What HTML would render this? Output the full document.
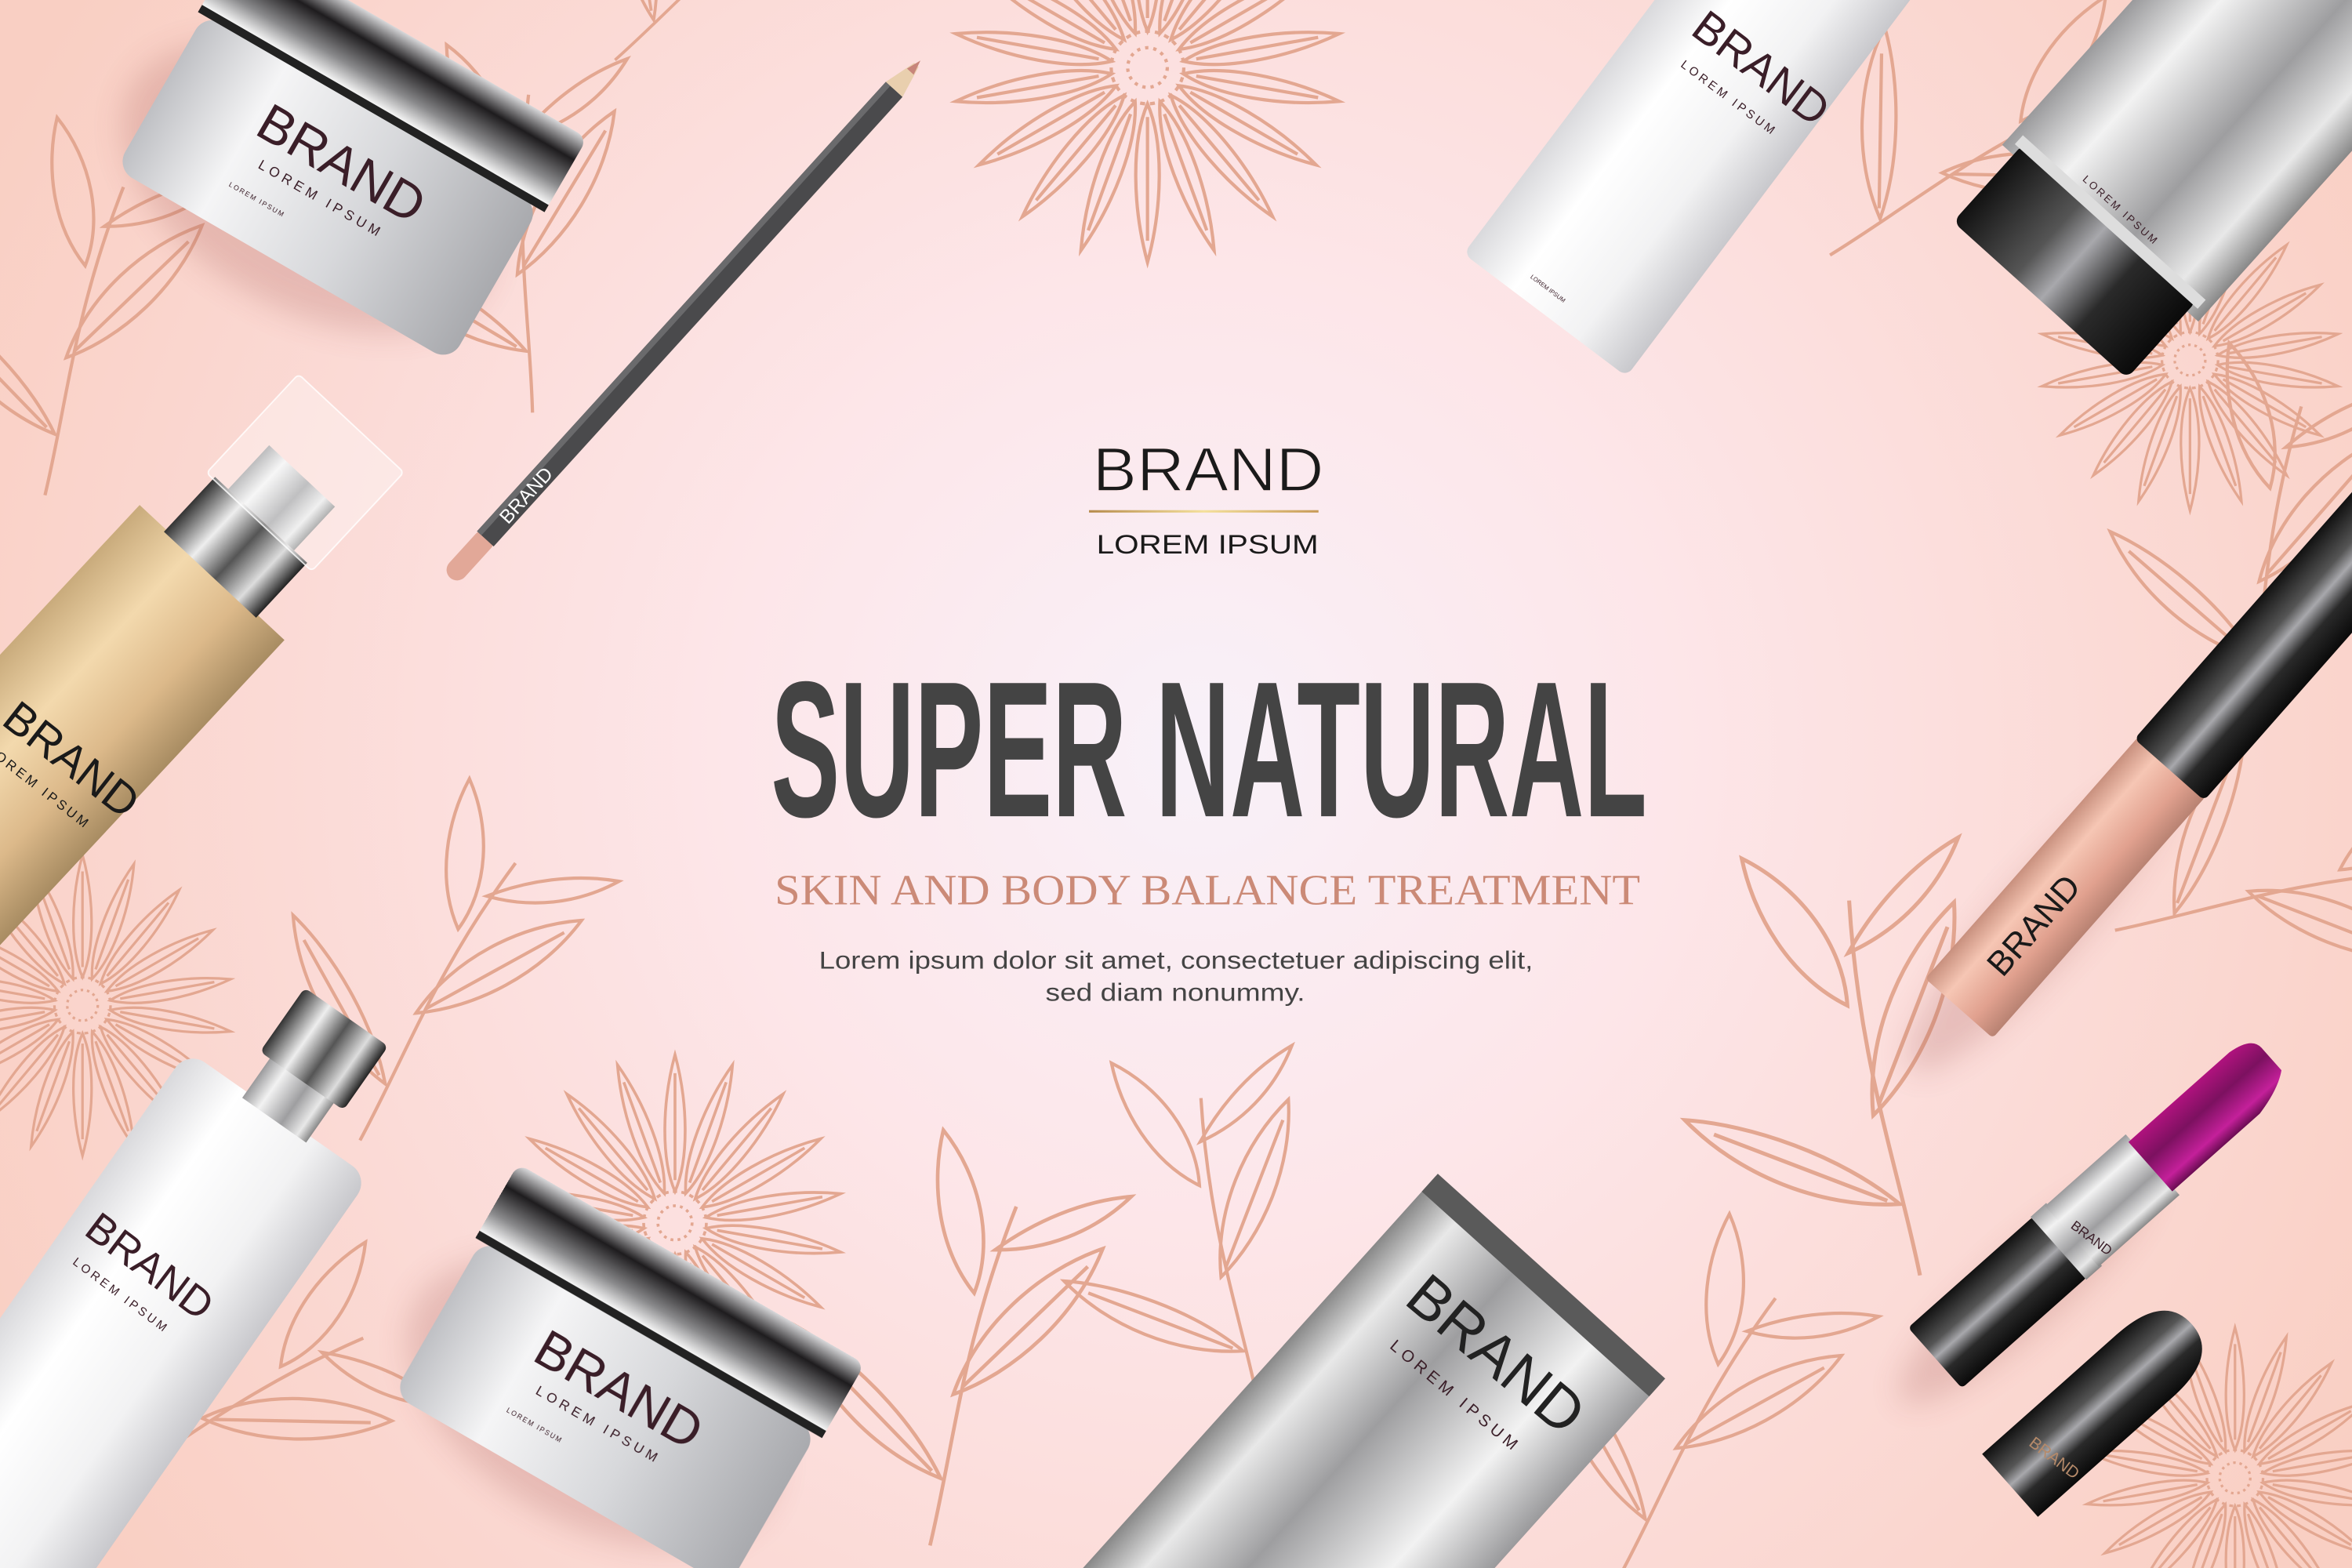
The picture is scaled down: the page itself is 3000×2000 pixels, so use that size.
<!DOCTYPE html>
<html><head><meta charset="utf-8"><style>
html,body{margin:0;padding:0;width:3000px;height:2000px;overflow:hidden;background:#fbe0dc}
svg{display:block;position:absolute;left:0;top:0}
</style></head><body>
<svg width="3000" height="2000" viewBox="0 0 1568 1045" preserveAspectRatio="none" xmlns="http://www.w3.org/2000/svg">
<defs>
<radialGradient id="bg" cx="800" cy="500" r="900" gradientUnits="userSpaceOnUse">
<stop offset="0" stop-color="#f8f1f9"/><stop offset="0.35" stop-color="#fde6e9"/><stop offset="1" stop-color="#f9cfc3"/></radialGradient>
<linearGradient id="gold" x1="0" y1="0" x2="0" y2="1"><stop offset="0" stop-color="#c9ab7c"/><stop offset="0.35" stop-color="#f3d9ad"/><stop offset="0.7" stop-color="#dcb98a"/><stop offset="1" stop-color="#a88c62"/></linearGradient>
<linearGradient id="white" x1="0" y1="0" x2="0" y2="1"><stop offset="0" stop-color="#d9d9dc"/><stop offset="0.3" stop-color="#ffffff"/><stop offset="0.7" stop-color="#f2f2f3"/><stop offset="1" stop-color="#c8c8cc"/></linearGradient>
<linearGradient id="silver" x1="0" y1="0" x2="0" y2="1"><stop offset="0" stop-color="#9a9a9c"/><stop offset="0.25" stop-color="#f2f2f2"/><stop offset="0.6" stop-color="#9e9ea0"/><stop offset="0.85" stop-color="#e8e8e8"/><stop offset="1" stop-color="#888"/></linearGradient>
<linearGradient id="chrome" x1="0" y1="0" x2="0" y2="1"><stop offset="0" stop-color="#333"/><stop offset="0.3" stop-color="#eee"/><stop offset="0.55" stop-color="#555"/><stop offset="0.8" stop-color="#ddd"/><stop offset="1" stop-color="#222"/></linearGradient>
<linearGradient id="black" x1="0" y1="0" x2="0" y2="1"><stop offset="0" stop-color="#111"/><stop offset="0.35" stop-color="#555"/><stop offset="0.5" stop-color="#a8a8ac"/><stop offset="0.7" stop-color="#2a2a2a"/><stop offset="1" stop-color="#0a0a0a"/></linearGradient>
<linearGradient id="pinkg" x1="0" y1="0" x2="0" y2="1"><stop offset="0" stop-color="#c8907e"/><stop offset="0.3" stop-color="#f6c6b4"/><stop offset="0.7" stop-color="#e1a18f"/><stop offset="1" stop-color="#b88272"/></linearGradient>
<linearGradient id="mag" x1="0" y1="0" x2="0" y2="1"><stop offset="0" stop-color="#b0127e"/><stop offset="0.4" stop-color="#7c1160"/><stop offset="0.8" stop-color="#c4209a"/><stop offset="1" stop-color="#6a0c52"/></linearGradient>
<linearGradient id="lidg" x1="0" y1="0" x2="0" y2="1"><stop offset="0" stop-color="#d8d8da"/><stop offset="0.3" stop-color="#1e1c1e"/><stop offset="0.65" stop-color="#8a8a8c"/><stop offset="0.9" stop-color="#f4f4f4"/><stop offset="1" stop-color="#bbb"/></linearGradient>
<linearGradient id="jarb" x1="0" y1="0" x2="1" y2="0"><stop offset="0" stop-color="#bfc0c4"/><stop offset="0.25" stop-color="#f5f5f6"/><stop offset="0.6" stop-color="#d7d8db"/><stop offset="1" stop-color="#a9aaae"/></linearGradient>
<linearGradient id="goldline" x1="0" y1="0" x2="1" y2="0"><stop offset="0" stop-color="#b58a4a"/><stop offset="0.5" stop-color="#f4e09a"/><stop offset="1" stop-color="#c79a56"/></linearGradient>
<filter id="sh" x="-30%" y="-30%" width="160%" height="160%"><feGaussianBlur stdDeviation="10"/></filter>

<g id="petal"><path d="M0,-22 C-10,-45 -9,-85 0,-118 C9,-85 10,-45 0,-22Z M0,-30 L0,-105" fill="none"/></g>
<g id="daisy" fill="none" stroke="#e3a791" stroke-width="2">
<use href="#petal"/><use href="#petal" transform="rotate(20)"/><use href="#petal" transform="rotate(40)"/><use href="#petal" transform="rotate(60)"/><use href="#petal" transform="rotate(80)"/><use href="#petal" transform="rotate(100)"/><use href="#petal" transform="rotate(120)"/><use href="#petal" transform="rotate(140)"/><use href="#petal" transform="rotate(160)"/><use href="#petal" transform="rotate(180)"/><use href="#petal" transform="rotate(200)"/><use href="#petal" transform="rotate(220)"/><use href="#petal" transform="rotate(240)"/><use href="#petal" transform="rotate(260)"/><use href="#petal" transform="rotate(280)"/><use href="#petal" transform="rotate(300)"/><use href="#petal" transform="rotate(320)"/><use href="#petal" transform="rotate(340)"/>
<circle r="22" stroke-dasharray="3 3"/><circle r="12" stroke-dasharray="2 3"/>
</g>
<g id="branch" fill="none" stroke="#e3a791" stroke-width="2.2">
<path d="M0,0 C20,-60 30,-120 70,-200"/>
<path d="M10,-40 C-30,-60 -60,-100 -70,-140 C-40,-120 -5,-80 10,-40Z M-60,-125 L5,-45"/>
<path d="M22,-90 C60,-100 100,-130 120,-170 C80,-160 40,-130 22,-90Z M110,-160 L28,-94"/>
<path d="M40,-150 C20,-180 20,-220 30,-250 C50,-220 55,-180 40,-150Z"/>
<path d="M55,-175 C80,-190 110,-200 140,-200 C115,-180 85,-172 55,-175Z"/>
</g>
<g id="jar">
<rect x="-140" y="-40" width="280" height="130" rx="14" fill="url(#jarb)"/>
<rect x="-145" y="-100" width="290" height="62" rx="8" fill="url(#lidg)"/>
<rect x="-145" y="-44" width="290" height="6" fill="#222"/>
<text x="0" y="18" text-anchor="middle" font-family="Liberation Sans,sans-serif" font-size="38" fill="#3a1e28">BRAND</text>
<text x="0" y="38" text-anchor="middle" font-family="Liberation Sans,sans-serif" font-size="10" letter-spacing="3" fill="#3a1e28">LOREM IPSUM</text>
<text x="-40" y="60" text-anchor="middle" font-family="Liberation Sans,sans-serif" font-size="5" letter-spacing="1" fill="#3a1e28">LOREM IPSUM</text>
</g>
</defs>

<rect width="1568" height="1045" fill="url(#bg)"/>

<!-- floral sketches -->
<use href="#daisy" transform="translate(765,45) scale(1.1)"/>
<use href="#daisy" transform="translate(1460,240) scale(0.85)"/>
<use href="#daisy" transform="translate(55,670) scale(0.85)"/>
<use href="#daisy" transform="translate(450,815) scale(0.95)"/>
<use href="#daisy" transform="translate(1490,985) scale(0.85)"/>
<use href="#branch" transform="translate(355,275) rotate(-20)"/>
<use href="#branch" transform="translate(410,40) rotate(30) scale(0.9)"/>
<use href="#branch" transform="translate(30,330) rotate(-5)"/>
<use href="#branch" transform="translate(240,760) rotate(10)"/>
<use href="#branch" transform="translate(60,1000) rotate(40)"/>
<use href="#branch" transform="translate(620,1030) rotate(-5) scale(1.1)"/>
<use href="#branch" transform="translate(840,940) rotate(-30)"/>
<use href="#branch" transform="translate(1280,850) rotate(-30) scale(1.2)"/>
<use href="#branch" transform="translate(1220,170) rotate(40)"/>
<use href="#branch" transform="translate(1410,620) rotate(60)"/>
<use href="#branch" transform="translate(1080,1050) rotate(10)"/>
<use href="#branch" transform="translate(1500,480) rotate(-10)"/>

<!-- shadows -->
<g opacity="0.22" filter="url(#sh)" fill="#a0504a">
<ellipse cx="205" cy="125" rx="135" ry="80" transform="rotate(30 205 125)"/>
<ellipse cx="395" cy="935" rx="135" ry="80" transform="rotate(30 395 935)"/>
<ellipse cx="1360" cy="615" rx="130" ry="28" transform="rotate(-48.6 1360 615)"/>
<ellipse cx="1350" cy="860" rx="110" ry="26" transform="rotate(-41.6 1350 860)"/>
</g>

<!-- top-left jar -->
<use href="#jar" transform="translate(230,105) rotate(30) scale(0.92)"/>

<!-- pencil -->
<g transform="translate(300,385) rotate(-47.7)">
<rect x="0" y="-7" width="40" height="14" rx="7" fill="#e2a898"/>
<rect x="35" y="-7.5" width="405" height="15" fill="#4a4a4c"/>
<rect x="35" y="-7.5" width="405" height="4" fill="#6a6a6c"/>
<path d="M440,-7.5 L462,-2 L462,2 L440,7.5Z" fill="#e9cfae"/>
<path d="M456,-3 L466,0 L456,3Z" fill="#c7857a"/>
<text x="52" y="5" font-family="Liberation Sans,sans-serif" font-size="13" fill="#fff">BRAND</text>
</g>

<!-- top white tube -->
<g transform="translate(1030,210) rotate(-53)">
<rect x="0" y="-68" width="400" height="136" rx="6" fill="url(#white)"/>
</g>
<text transform="translate(1126,22) rotate(37)" font-family="Liberation Sans,sans-serif" font-size="30" fill="#3a1e28">BRAND</text>
<text transform="translate(1120,44) rotate(37)" font-family="Liberation Sans,sans-serif" font-size="8" letter-spacing="2" fill="#3a1e28">LOREM IPSUM</text>
<text transform="translate(1020,185) rotate(37)" font-family="Liberation Sans,sans-serif" font-size="4" fill="#3a1e28">LOREM IPSUM</text>

<!-- top-right silver tube -->
<g transform="translate(1360,200) rotate(-48)">
<rect x="60" y="-88" width="400" height="176" fill="url(#silver)"/>
<rect x="0" y="-78" width="70" height="156" rx="6" fill="url(#black)"/>
<rect x="66" y="-82" width="8" height="164" fill="#ddd"/>
</g>
<text transform="translate(1388,120) rotate(42)" font-family="Liberation Sans,sans-serif" font-size="7" letter-spacing="1.5" fill="#3a1e28">LOREM IPSUM</text>

<!-- gold spray bottle -->
<g transform="translate(140,383) rotate(-47)">
<rect x="-420" y="-66" width="422" height="132" fill="url(#gold)"/>
<rect x="0" y="-42" width="50" height="84" fill="url(#chrome)"/>
<rect x="50" y="-30" width="40" height="60" fill="url(#silver)"/>
<rect x="48" y="-48" width="90" height="96" rx="3" fill="#fff" fill-opacity="0.35" stroke="#fff" stroke-opacity="0.8"/>
</g>
<text transform="translate(0,482) rotate(38)" font-family="Liberation Sans,sans-serif" font-size="30" fill="#1a1a1a">BRAND</text>
<text transform="translate(-4,505) rotate(38)" font-family="Liberation Sans,sans-serif" font-size="9" letter-spacing="2" fill="#1a1a1a">OREM IPSUM</text>

<!-- white bottle bottom-left -->
<g transform="translate(200,722) rotate(-55)">
<rect x="-520" y="-74" width="495" height="148" rx="14" fill="url(#white)"/>
<rect x="-30" y="-26" width="34" height="52" fill="url(#silver)"/>
<rect x="2" y="-34" width="52" height="68" rx="4" fill="url(#chrome)"/>
</g>
<text transform="translate(55,822) rotate(37)" font-family="Liberation Sans,sans-serif" font-size="28" fill="#3a1e28">BRAND</text>
<text transform="translate(48,842) rotate(37)" font-family="Liberation Sans,sans-serif" font-size="8" letter-spacing="2" fill="#3a1e28">LOREM IPSUM</text>

<!-- bottom jar -->
<use href="#jar" transform="translate(415,922) rotate(30) scale(0.92)"/>

<!-- bottom silver tube -->
<g transform="translate(1033,852) rotate(132)">
<rect x="0" y="-102" width="450" height="204" fill="url(#silver)"/>
<rect x="-2" y="-102" width="16" height="204" fill="#5a5a5a"/>
</g>
<text transform="translate(935,868) rotate(40)" font-family="Liberation Sans,sans-serif" font-size="40" fill="#222">BRAND</text>
<text transform="translate(926,898) rotate(40)" font-family="Liberation Sans,sans-serif" font-size="11" letter-spacing="3" fill="#3a1e28">LOREM IPSUM</text>

<!-- lip gloss -->
<g transform="translate(1306,672) rotate(-48.6)">
<rect x="0" y="-30" width="215" height="60" rx="3" fill="url(#pinkg)"/>
<rect x="212" y="-31" width="320" height="62" rx="4" fill="url(#black)"/>
</g>
<text transform="translate(1335,652) rotate(-48.6)" font-family="Liberation Sans,sans-serif" font-size="23" fill="#1a1a1a">BRAND</text>

<!-- lipstick -->
<g transform="translate(1290,905) rotate(-41.6)">
<rect x="0" y="-27" width="112" height="54" rx="3" fill="url(#black)"/>
<rect x="110" y="-28" width="14" height="56" fill="url(#silver)"/>
<rect x="122" y="-27" width="72" height="54" fill="url(#silver)"/>
<path d="M192,-22 L282,-22 Q300,-20 300,-10 L300,10 Q290,18 270,22 L192,22Z" fill="url(#mag)"/>
</g>
<text transform="translate(1380,818) rotate(37)" font-family="Liberation Sans,sans-serif" font-size="9" fill="#3a1e28">BRAND</text>
<g transform="translate(1340,990) rotate(-41.6)">
<path d="M0,-28 L120,-28 Q162,-28 162,0 Q162,28 120,28 L0,28Z" fill="url(#black)"/>
</g>
<text transform="translate(1352,963) rotate(37)" font-family="Liberation Sans,sans-serif" font-size="11" fill="#b58a6a">BRAND</text>

<!-- central text -->
<text x="805.5" y="327" text-anchor="middle" font-family="Liberation Sans,sans-serif" font-size="41" textLength="154" lengthAdjust="spacingAndGlyphs" fill="#1a1a1a" stroke="#fde8ea" stroke-width="0.8">BRAND</text>
<rect x="726" y="340" width="153" height="1.6" fill="url(#goldline)"/>
<text x="805" y="368.8" text-anchor="middle" font-family="Liberation Sans,sans-serif" font-size="18" textLength="148" lengthAdjust="spacingAndGlyphs" fill="#1a1a1a">LOREM IPSUM</text>
<text x="806" y="544" text-anchor="middle" font-family="Liberation Sans,sans-serif" font-weight="bold" font-size="129" textLength="584" lengthAdjust="spacingAndGlyphs" fill="#444">SUPER NATURAL</text>
<text x="805" y="602.6" text-anchor="middle" font-family="Liberation Serif,serif" font-size="28.5" textLength="577" lengthAdjust="spacingAndGlyphs" fill="#cb8a77">SKIN AND BODY BALANCE TREATMENT</text>
<text x="784" y="645.5" text-anchor="middle" font-family="Liberation Sans,sans-serif" font-size="16.5" textLength="476" lengthAdjust="spacingAndGlyphs" fill="#444">Lorem ipsum dolor sit amet, consectetuer adipiscing elit,</text>
<text x="783.5" y="667" text-anchor="middle" font-family="Liberation Sans,sans-serif" font-size="16.5" textLength="173" lengthAdjust="spacingAndGlyphs" fill="#444">sed diam nonummy.</text>
</svg>
</body></html>
